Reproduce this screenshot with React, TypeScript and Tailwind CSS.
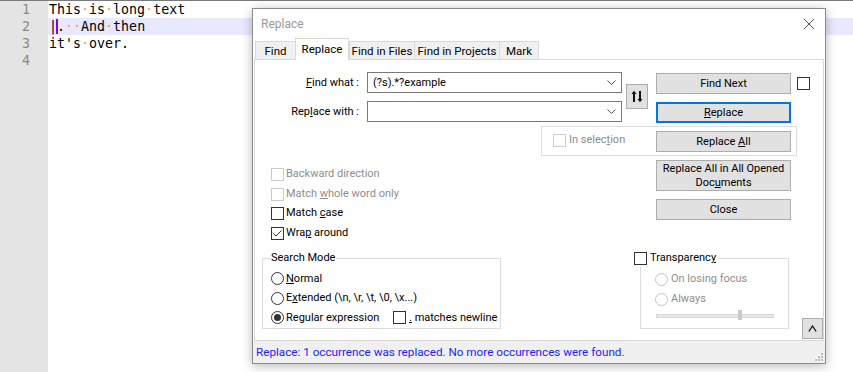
import type { ReactNode } from "react";

const ui = "font-['Roboto',sans-serif] text-[11px] leading-[16px] text-black whitespace-nowrap";

const Ws = () => <span className="text-[#f5a04a]">·</span>;

const Check = ({ checked, disabled }: { checked?: boolean; disabled?: boolean }) => (
  <span
    className={`flex h-[13px] w-[13px] shrink-0 items-center justify-center border bg-white ${
      disabled ? "border-[#cccccc]" : "border-[#333333]"
    }`}
  >
    {checked && (
      <svg width="11" height="11" viewBox="0 0 11 11">
        <polyline points="1.5,5.5 4,8 9.5,2.5" fill="none" stroke="#333" strokeWidth="1" />
      </svg>
    )}
  </span>
);

const Radio = ({ checked, disabled }: { checked?: boolean; disabled?: boolean }) => (
  <span
    className={`flex h-[13px] w-[13px] shrink-0 items-center justify-center rounded-full border bg-white ${
      disabled ? "border-[#c4c4c4]" : "border-[#333333]"
    }`}
  >
    {checked && <span className="h-[7px] w-[7px] rounded-full bg-[#333333]" />}
  </span>
);

const Btn = ({
  children,
  className = "",
  focused,
}: {
  children: ReactNode;
  className?: string;
  focused?: boolean;
}) => (
  <div
    className={`flex w-[135px] items-center justify-center bg-[#e1e1e1] text-center leading-[14px] ${
      focused ? "border-2 border-[#0078d7]" : "border border-[#adadad]"
    } ${className}`}
  >
    {children}
  </div>
);

const Combo = ({ value }: { value?: string }) => (
  <div className="flex h-[21px] w-[255px] items-center border border-[#7a7a7a] bg-white pl-[5px] pr-[5px]">
    <span className="flex-1">{value}</span>
    <svg width="9" height="5" viewBox="0 0 9 5">
      <polyline points="0.5,0.5 4.5,4.5 8.5,0.5" fill="none" stroke="#555" strokeWidth="1" />
    </svg>
  </div>
);

const Tab = ({ label, w, active }: { label: string; w: number; active?: boolean }) => (
  <div
    style={{ width: w }}
    className={
      active
        ? "relative z-10 -mb-px flex h-[22px] items-start justify-center border border-b-0 border-[#d9d9d9] bg-white pt-[2px] text-[11.5px]"
        : "flex h-[18px] items-center justify-center border border-b-0 border-r-0 border-[#d9d9d9] bg-[#f0f0f0] text-[11.5px] last:border-r"
    }
  >
    {label}
  </div>
);

export default function App() {
  return (
    <div className="relative h-[372px] w-[853px] overflow-hidden border-t border-[#7a7a7a] bg-white">
      {/* editor */}
      <div className="flex h-full">
        <div className="flex w-[48px] flex-col bg-[#e4e4e4] pr-[18px] text-right font-['DejaVu_Sans_Mono',monospace] text-[13.3px] leading-[17px] text-[#8a8a8a]">
          <div>1</div>
          <div>2</div>
          <div>3</div>
          <div>4</div>
        </div>
        <div className="flex-1 font-['DejaVu_Sans_Mono',monospace] text-[13.3px] leading-[17px] whitespace-pre text-black">
          <div className="pl-[1px]">
            This<Ws />is<Ws />long<Ws />text
          </div>
          <div className="bg-[#e8e8ff] pl-[1px]">
            |<span className="relative mx-[-1px] inline-block h-[15px] w-[2px] bg-[#8000ff] align-[-3px]" />.<Ws />
            <Ws />And<Ws />then
          </div>
          <div className="pl-[1px]">
            it's<Ws />over.
          </div>
        </div>
      </div>

      {/* Replace dialog */}
      <div
        className={`absolute left-[252px] top-[7px] flex h-[356px] w-[574px] flex-col border border-[#8c8c8c] bg-white shadow-[0_2px_10px_rgba(0,0,0,0.28)] ${ui}`}
      >
        <div className="flex h-[30px] items-center justify-between pl-[8px] pr-[10px]">
          <span className="text-[12px] text-[#999999]">Replace</span>
          <svg width="12" height="12" viewBox="0 0 12 12">
            <path d="M1 1 L11 11 M11 1 L1 11" stroke="#555" strokeWidth="1" />
          </svg>
        </div>

        <div className="flex h-[20px] items-end pl-[2px]">
          <Tab label="Find" w={40} />
          <Tab label="Replace" w={54} active />
          <Tab label="Find in Files" w={65} />
          <Tab label="Find in Projects" w={85} />
          <Tab label="Mark" w={40} />
        </div>

        <div className="mx-px flex flex-1 flex-col border border-[#d9d9d9]">
          {/* find / replace fields */}
          <div className="mt-[12px] flex items-start">
            <div className="flex flex-col gap-[8px]">
              <div className="flex items-center">
                <span className="w-[104px] text-right">
                  <u>F</u>ind what :
                </span>
                <span className="ml-[8px]">
                  <Combo value="(?s).*?example" />
                </span>
              </div>
              <div className="flex items-center">
                <span className="w-[104px] text-right">
                  Rep<u>l</u>ace with :
                </span>
                <span className="ml-[8px]">
                  <Combo />
                </span>
              </div>
            </div>
            <div className="ml-[4px] mt-[12px] flex h-[25px] w-[22px] items-center justify-center border border-[#adadad] bg-[#e1e1e1]">
              <svg width="12" height="13" viewBox="0 0 12 13">
                <path d="M3 12 V2" stroke="#111" strokeWidth="2" />
                <path d="M0.5 4 L3 0.8 L5.5 4 Z" fill="#111" />
                <path d="M9 1 V11" stroke="#111" strokeWidth="2" />
                <path d="M6.5 9 L9 12.2 L11.5 9 Z" fill="#111" />
              </svg>
            </div>
            <div className="ml-[8px] mt-px flex flex-col gap-[8px]">
              <Btn className="h-[21px]">Find Next</Btn>
              <Btn className="h-[21px]" focused>
                <span>
                  <u>R</u>eplace
                </span>
              </Btn>
            </div>
            <span className="ml-[6px] mt-[5px]">
              <Check />
            </span>
          </div>

          {/* in selection */}
          <div className="ml-[286px] mt-[3px] flex h-[30px] w-[256px] items-start border border-[#dcdcdc]">
            <span className="ml-[11px] mt-[7px]">
              <Check disabled />
            </span>
            <span className="ml-[3px] mt-[5px] text-[#8d8d8d]">
              In selec<u>t</u>ion
            </span>
            <Btn className="ml-auto mr-[5px] mt-[4px] h-[21px]">
              <span>
                Replace <u>A</u>ll
              </span>
            </Btn>
          </div>

          {/* options + buttons */}
          <div className="mt-[4px] flex items-start">
            <div className="ml-[16px] mt-[8px] flex w-[385px] flex-col">
              {[
                { label: <>Backward direction</>, disabled: true },
                { label: <>Match <u>w</u>hole word only</>, disabled: true },
                { label: <>Match <u>c</u>ase</> },
                { label: <>Wra<u>p</u> around</>, checked: true },
              ].map((o, i) => (
                <div key={i} className="flex h-[19.5px] items-start">
                  <Check disabled={o.disabled} checked={o.checked} />
                  <span className={`ml-[2px] -mt-[2px] ${o.disabled ? "text-[#8d8d8d]" : ""}`}>{o.label}</span>
                </div>
              ))}
            </div>
            <div className="flex flex-col gap-[8px]">
              <Btn className="h-[31px]">
                <span>
                  Replace All in All Opened
                  <br />
                  Doc<u>u</u>ments
                </span>
              </Btn>
              <Btn className="h-[21px]">Close</Btn>
            </div>
          </div>

          {/* search mode + transparency */}
          <div className="mt-[4px] flex items-start">
            <fieldset className="ml-[7px] h-[79px] w-[239px] min-w-0 border border-[#dcdcdc] pl-[8px]">
              <legend className="ml-[-1px] px-px">Search Mode</legend>
              <div className="mt-[3px] flex h-[19.5px] items-center">
                <Radio />
                <span className="ml-[2px]">
                  <u>N</u>ormal
                </span>
              </div>
              <div className="flex h-[19.5px] items-center">
                <Radio />
                <span className="ml-[2px]">
                  E<u>x</u>tended (\n, \r, \t, \0, \x...)
                </span>
              </div>
              <div className="flex h-[19.5px] items-center">
                <div className="flex w-[122px] items-center">
                  <Radio checked />
                  <span className="ml-[2px]">
                    Re<u>g</u>ular expression
                  </span>
                </div>
                <Check />
                <span className="ml-[3px]">
                  <u>.</u> matches newline
                </span>
              </div>
            </fieldset>

            <fieldset className="ml-[139px] h-[79px] w-[149px] min-w-0 border border-[#dcdcdc] pl-[14px]">
              <legend className="ml-[-21px] flex items-center bg-white">
                <Check />
                <span className="ml-[3px] pr-[3px]">
                  Transparenc<u>y</u>
                </span>
              </legend>
              <div className="mt-[3px] flex h-[20px] items-center text-[#8d8d8d]">
                <Radio disabled />
                <span className="ml-[3px]">On losing focus</span>
              </div>
              <div className="flex h-[20px] items-center text-[#8d8d8d]">
                <Radio disabled />
                <span className="ml-[3px]">Always</span>
              </div>
              <div className="relative ml-px mt-[5px] h-[4px] w-[118px] border border-[#d6d6d6] bg-[#e7e7e7]">
                <div className="absolute left-[81px] top-[-5px] h-[10px] w-[4px] bg-[#c9c9c9]" />
              </div>
            </fieldset>

            <div className="ml-[13px] mt-[68px] flex h-[21px] w-[21px] items-center justify-center border border-[#adadad] bg-[#e1e1e1]">
              <svg width="9" height="7" viewBox="0 0 9 7">
                <polyline points="0.8,6.5 4.5,1 8.2,6.5" fill="none" stroke="#111" strokeWidth="1.3" />
              </svg>
            </div>
          </div>
        </div>

        {/* status bar */}
        <div className="flex h-[22px] items-end justify-between bg-[#f0f0f0] pl-[3px]">
          <span className="mb-[3px] text-[11.7px] text-[#2222ff]">
            Replace: 1 occurrence was replaced. No more occurrences were found.
          </span>
          <svg width="10" height="10" viewBox="0 0 10 10" className="mb-px mr-px">
            <rect x="7" y="1" width="2" height="2" fill="#bdbdbd" />
            <rect x="4" y="4" width="2" height="2" fill="#bdbdbd" />
            <rect x="7" y="4" width="2" height="2" fill="#bdbdbd" />
            <rect x="1" y="7" width="2" height="2" fill="#bdbdbd" />
            <rect x="4" y="7" width="2" height="2" fill="#bdbdbd" />
            <rect x="7" y="7" width="2" height="2" fill="#bdbdbd" />
          </svg>
        </div>
      </div>
    </div>
  );
}
